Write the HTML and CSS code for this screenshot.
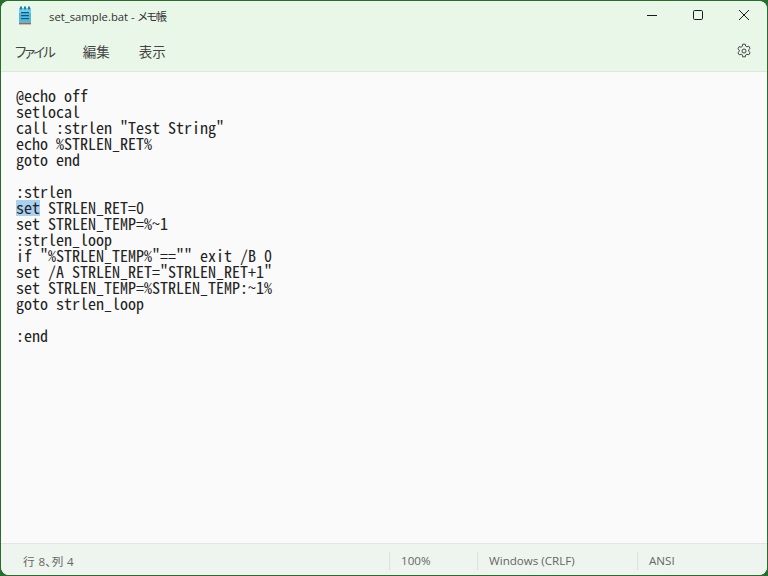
FILE: index.html
```html
<!DOCTYPE html>
<html lang="ja">
<head>
<meta charset="utf-8">
<title>set_sample.bat - メモ帳</title>
<link rel="stylesheet" href="styles.css">
</head>
<body>
<div class="window">
  <header class="titlebar">
    <svg class="app-icon" width="14" height="20" viewBox="0 0 14 20">
      <rect x="1" y="2" width="12" height="15" fill="#4fb9de"/>
      <rect x="1" y="2" width="12" height="5" fill="#6fcdea"/>
      <rect x="1" y="17" width="12" height="1.4" fill="#b5623a"/>
      <rect x="2" y="0.5" width="2" height="3" fill="#1f7fa8"/>
      <rect x="6" y="0.5" width="2" height="3" fill="#1f7fa8"/>
      <rect x="10" y="0.5" width="2" height="3" fill="#1f7fa8"/>
      <rect x="3" y="6" width="8" height="1.2" fill="#17577e"/>
      <rect x="3" y="9" width="8" height="1.2" fill="#17577e"/>
      <rect x="3" y="12" width="8" height="1.2" fill="#17577e"/>
    </svg>
    <span class="title">set_sample.bat - <span class="title-app">メモ帳</span></span>
    <div class="caption-buttons">
      <svg class="cap" width="12" height="12" viewBox="0 0 12 12"><path d="M1 6.5h10" stroke="#1a1a1a" fill="none"/></svg>
      <svg class="cap" width="12" height="12" viewBox="0 0 12 12"><rect x="1.5" y="1.5" width="9" height="9" rx="1.2" stroke="#1a1a1a" fill="none"/></svg>
      <svg class="cap" width="12" height="12" viewBox="0 0 12 12"><path d="M1 1l10 10M11 1L1 11" stroke="#1a1a1a" fill="none"/></svg>
    </div>
  </header>
  <nav class="menubar">
    <span class="menu-item menu-file">ファイル</span>
    <span class="menu-item">編集</span>
    <span class="menu-item">表示</span>
    <svg class="settings" width="16" height="16" viewBox="0 0 16 16">
      <path d="M6.7 1.2h2.6l.4 1.9 1.2.7 1.9-.6 1.3 2.2-1.4 1.3v1.6l1.4 1.3-1.3 2.2-1.9-.6-1.2.7-.4 1.9H6.7l-.4-1.9-1.2-.7-1.9.6-1.3-2.2 1.4-1.3V7.1L1.9 5.8l1.3-2.2 1.9.6 1.2-.7z" fill="none" stroke="#444" stroke-width="1"/>
      <circle cx="8" cy="8" r="2" fill="none" stroke="#444"/>
    </svg>
  </nav>
  <main class="editor"><pre class="code">@echo off
setlocal
call :strlen "Test String"
echo %STRLEN_RET%
goto end

:strlen
<span class="selection">set</span> STRLEN_RET=0
set STRLEN_TEMP=%~1
:strlen_loop
if "%STRLEN_TEMP%"=="" exit /B 0
set /A STRLEN_RET="STRLEN_RET+1"
set STRLEN_TEMP=%STRLEN_TEMP:~1%
goto strlen_loop

:end</pre></main>
  <footer class="statusbar">
    <span class="status-pos">行 8、列 4</span>
    <span class="status-cell zoom">100%</span>
    <span class="status-cell eol">Windows (CRLF)</span>
    <span class="status-cell enc">ANSI</span>
  </footer>
</div>
</body>
</html>
```
FILE: styles.css
```css
* { box-sizing: border-box; }
html, body { margin: 0; padding: 0; height: 100%; }
body {
  width: 768px;
  height: 576px;
  background: #2a6b2e;
  overflow: hidden;
  font-family: "Noto Sans CJK JP", "Noto Sans", sans-serif;
}
.window {
  width: 766px;
  height: 574px;
  margin: 1px;
  border-radius: 8px;
  overflow: hidden;
  display: flex;
  flex-direction: column;
  background: #fafafa;
}
.titlebar {
  height: 30px;
  flex: none;
  display: flex;
  align-items: center;
  background: #e9f7e9;
  padding-left: 17px;
}
.app-icon { flex: none; margin-top: -1px; }
.title {
  margin-left: 17px;
  font-family: "Open Sans", "Noto Sans CJK JP", sans-serif;
  font-size: 11.3px;
  font-feature-settings: "palt";
  color: #333;
  margin-top: -1px;
}
.title-app { letter-spacing: -1.2px; }
.caption-buttons {
  margin-left: auto;
  display: flex;
  align-items: center;
  gap: 34px;
  padding-right: 17px;
  margin-top: -2px;
}
.cap { display: block; }
.menubar {
  height: 41px;
  flex: none;
  display: flex;
  align-items: center;
  gap: 29px;
  background: #e9f7e9;
  border-bottom: 1px solid #dbe8db;
  padding-left: 14px;
  padding-right: 15px;
}
.menu-item {
  font-size: 13.5px;
  font-feature-settings: "palt";
  color: #444;
}
.menu-file { letter-spacing: -2px; }
.settings { margin-left: auto; }
.editor {
  flex: 1;
  min-height: 0;
  background: #fafafa;
  padding: 15px 15px 0;
}
.code {
  margin: 0;
  font-family: "Noto Sans Mono CJK JP", "Liberation Mono", monospace;
  font-size: 16px;
  font-weight: 300;
  line-height: 16px;
  color: #222;
}
.selection {
  display: inline-block;
  height: 17px;
  margin-bottom: -1px;
  vertical-align: top;
  background: linear-gradient(#a8d0f0, #a8d0f0) 0 1px no-repeat;
}
.statusbar {
  height: 32px;
  flex: none;
  display: flex;
  align-items: center;
  padding-top: 2px;
  background: #eef4ee;
  border-top: 1px solid #e2e6e2;
  font-size: 11.6px;
  color: #666;
  font-family: "Open Sans", "Noto Sans CJK JP", sans-serif;
}
.status-pos { padding-left: 22px; width: 388px; flex: none; font-feature-settings: "palt"; letter-spacing: 0.4px; }
.status-cell {
  display: flex;
  align-items: center;
  padding-left: 11px;
  border-left: 1px solid #dcdfdc;
  height: 18px;
  flex: none;
}
.zoom { width: 88px; }
.eol { width: 160px; }
.enc { width: 60px; }
```
